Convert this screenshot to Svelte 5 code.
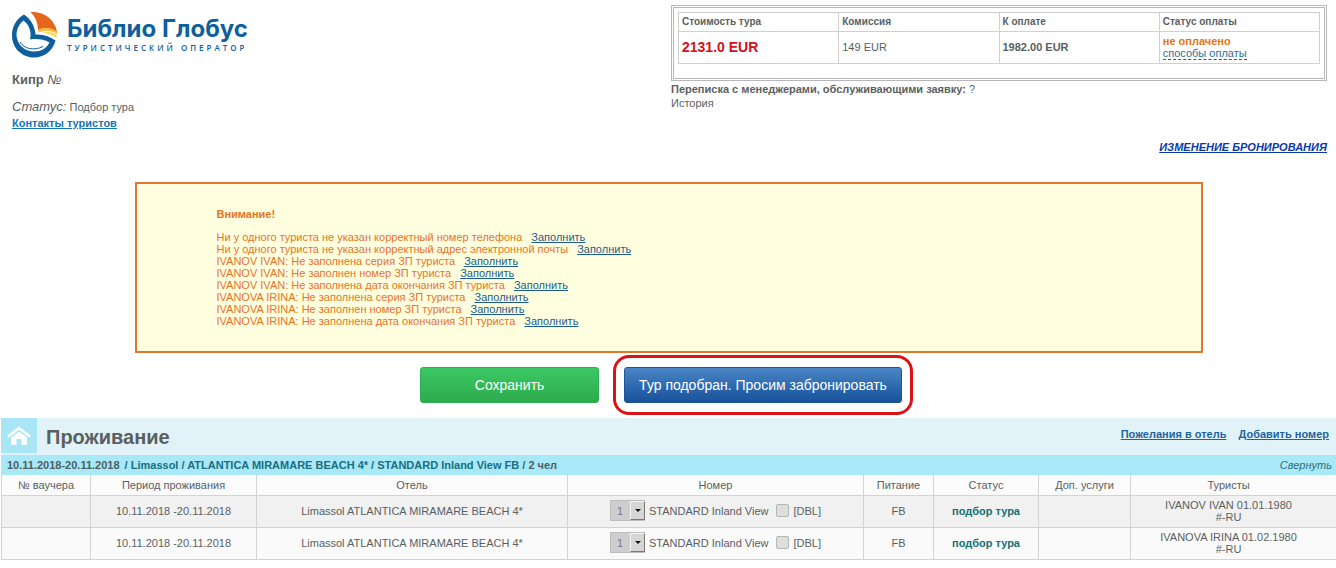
<script lang="ts">
	type Warning = {
		text: string;
	};

	type Stay = {
		period: string;
		hotel: string;
		rooms: string;
		room: string;
		bed: string;
		extraBed: boolean;
		meal: string;
		status: string;
		services: string;
		tourist: string;
		doc: string;
	};

	const warnings: Warning[] = [
		{ text: 'Ни у одного туриста не указан корректный номер телефона' },
		{ text: 'Ни у одного туриста не указан корректный адрес электронной почты' },
		{ text: 'IVANOV IVAN: Не заполнена серия ЗП туриста' },
		{ text: 'IVANOV IVAN: Не заполнен номер ЗП туриста' },
		{ text: 'IVANOV IVAN: Не заполнена дата окончания ЗП туриста' },
		{ text: 'IVANOVA IRINA: Не заполнена серия ЗП туриста' },
		{ text: 'IVANOVA IRINA: Не заполнен номер ЗП туриста' },
		{ text: 'IVANOVA IRINA: Не заполнена дата окончания ЗП туриста' }
	];

	let stays = $state<Stay[]>([
		{
			period: '10.11.2018 -20.11.2018',
			hotel: 'Limassol ATLANTICA MIRAMARE BEACH 4*',
			rooms: '1',
			room: 'STANDARD Inland View',
			bed: '[DBL]',
			extraBed: false,
			meal: 'FB',
			status: 'подбор тура',
			services: '',
			tourist: 'IVANOV IVAN 01.01.1980',
			doc: '#-RU'
		},
		{
			period: '10.11.2018 -20.11.2018',
			hotel: 'Limassol ATLANTICA MIRAMARE BEACH 4*',
			rooms: '1',
			room: 'STANDARD Inland View',
			bed: '[DBL]',
			extraBed: false,
			meal: 'FB',
			status: 'подбор тура',
			services: '',
			tourist: 'IVANOVA IRINA 01.02.1980',
			doc: '#-RU'
		}
	]);
</script>

<div class="page">
	<header class="top">
		<div class="booking">
			<a class="logo" href="#home" aria-label="Библио Глобус">
				<svg class="logo-mark" viewBox="0 0 46 46" aria-hidden="true">
					<path fill="#e8651c" d="M18.500 0C31 -1 43 7 45 20C39 15 32 15 26 18C26 11 23 4 18.500 0Z" />
					<path fill="#fdb92e" d="M26 18C32 15 39 15 45 20V22C39 18 32 18 27 20.500Z" />
					<path fill="#fdd44a" d="M30 21C36 19 41 20 44.500 23V26C40 22 35 21 30 21Z" />
					<path
						fill="#0e5f9e"
						fill-rule="evenodd"
						d="M12 2.500C18.500 7 23 14 23.500 22.500C31 22 37 24 43.500 28.500C41 39 32 45.500 22 45.500C10 45.500 0 36 0 23.500C0 14 4.500 7 12 2.500ZM11.500 8.500C6 13 3.500 20 5 26.500C7 34.500 14 39.500 22 39.500C29 39.500 34.500 36.500 37.500 30.500C31 27 25 26.500 18 27.500C20 20 17 12.500 11.500 8.500Z"
					/>
					<path fill="none" stroke="#0e5f9e" stroke-width="1" d="M8 30C12 37 22 39 31 34.500" />
				</svg>
				<span class="logo-text">
					<span class="logo-name">Библио Глобус</span>
					<span class="logo-sub">ТУРИСТИЧЕСКИЙ ОПЕРАТОР</span>
				</span>
			</a>
			<h1 class="country">Кипр <i>№</i></h1>
			<div class="status"><i>Статус:</i> Подбор тура</div>
			<a class="contacts" href="#contacts">Контакты туристов</a>
		</div>

		<div class="summary">
			<div class="payment">
				<table class="payment-table">
					<thead>
						<tr>
							<th>Стоимость тура</th>
							<th>Комиссия</th>
							<th>К оплате</th>
							<th>Статус оплаты</th>
						</tr>
					</thead>
					<tbody>
						<tr>
							<td class="total">2131.0 EUR</td>
							<td>149 EUR</td>
							<td><b>1982.00 EUR</b></td>
							<td>
								<div class="unpaid">не оплачено</div>
								<a class="methods" href="#methods">способы оплаты</a>
							</td>
						</tr>
					</tbody>
				</table>
			</div>
			<div class="mail"><b>Переписка с менеджерами, обслуживающими заявку:</b> ?</div>
			<div class="mail">История</div>
			<a class="change" href="#change">ИЗМЕНЕНИЕ БРОНИРОВАНИЯ</a>
		</div>
	</header>

	<section class="attention">
		<h2>Внимание!</h2>
		<ul>
			{#each warnings as warning}
				<li>{warning.text} <a href="#fill">Заполнить</a></li>
			{/each}
		</ul>
	</section>

	<div class="actions">
		<button class="btn save" type="button">Сохранить</button>
		<div class="marker">
			<button class="btn book" type="button">Тур подобран. Просим забронировать</button>
		</div>
	</div>

	<section class="stay">
		<div class="stay-head">
			<div class="stay-icon">
				<svg viewBox="0 0 24 20" width="24" height="20" aria-hidden="true">
					<path fill="none" stroke="#fff" stroke-width="2.500" d="M1 10.500L12 2L23 10.500" />
					<path fill="#fff" d="M4 11.500L12 5.500L20 11.500V19H14.500V13H9.500V19H4Z" />
				</svg>
			</div>
			<h2>Проживание</h2>
			<nav>
				<a href="#wishes">Пожелания в отель</a>
				<a href="#add">Добавить номер</a>
			</nav>
		</div>
		<div class="stay-bar">
			<div>
				<span class="dates">10.11.2018-20.11.2018</span>
				/ Limassol / ATLANTICA MIRAMARE BEACH 4* / STANDARD Inland View FB /
				<span class="people">2 чел</span>
			</div>
			<button class="collapse" type="button">Свернуть</button>
		</div>
		<table class="stay-table">
			<colgroup>
				<col class="c-voucher" />
				<col class="c-period" />
				<col class="c-hotel" />
				<col class="c-room" />
				<col class="c-meal" />
				<col class="c-status" />
				<col class="c-services" />
				<col />
			</colgroup>
			<thead>
				<tr>
					<th>№ ваучера</th>
					<th>Период проживания</th>
					<th>Отель</th>
					<th>Номер</th>
					<th>Питание</th>
					<th>Статус</th>
					<th>Доп. услуги</th>
					<th>Туристы</th>
				</tr>
			</thead>
			<tbody>
				{#each stays as stay}
					<tr>
						<td></td>
						<td>{stay.period}</td>
						<td>{stay.hotel}</td>
						<td>
							<div class="room">
								<span class="select">
									<select bind:value={stay.rooms} aria-label="Номер">
										<option>1</option>
										<option>2</option>
									</select>
									<span class="arrow"></span>
								</span>
								<span>{stay.room}</span>
								<label>
									<input type="checkbox" bind:checked={stay.extraBed} />
									{stay.bed}
								</label>
							</div>
						</td>
						<td>{stay.meal}</td>
						<td class="state">{stay.status}</td>
						<td>{stay.services}</td>
						<td>{stay.tourist}<br />{stay.doc}</td>
					</tr>
				{/each}
			</tbody>
		</table>
	</section>
</div>

<style>
	:global(body) {
		margin: 0;
		background: #fff;
	}

	.page {
		padding-left: 1px;
		font-family: 'Liberation Sans', Arial, sans-serif;
		font-size: 11px;
		line-height: 12px;
		color: #5a5f61;
	}

	h1,
	h2,
	ul {
		margin: 0;
		padding: 0;
	}

	.top {
		display: flex;
		justify-content: space-between;
		padding: 5px 9px 0 11px;
	}

	.booking {
		display: flex;
		flex-direction: column;
		align-items: flex-start;
		padding-top: 7px;
	}

	.logo {
		display: flex;
		gap: 9px;
		text-decoration: none;
		color: #0e5f9e;
	}

	.logo-mark {
		width: 46px;
		height: 46px;
	}

	.logo-text {
		display: flex;
		flex-direction: column;
		padding-top: 4px;
	}

	.logo-name {
		font-family: Inter, sans-serif;
		font-size: 24px;
		font-weight: 700;
		line-height: 26px;
	}

	.logo-sub {
		font-family: 'Open Sans', sans-serif;
		font-size: 8px;
		font-weight: 600;
		line-height: 12px;
		letter-spacing: 3px;
	}

	.country {
		margin-top: 14px;
		font-size: 13px;
		line-height: 16px;
	}

	.country i {
		font-weight: normal;
	}

	.status {
		margin-top: 11px;
		line-height: 16px;
	}

	.status i {
		font-size: 13px;
	}

	.contacts {
		margin-top: 1px;
		font-weight: bold;
		line-height: 14px;
		color: #1275b5;
	}

	.summary {
		display: flex;
		flex-direction: column;
		width: 50%;
		max-width: 656px;
	}

	.payment {
		padding: 4px 4px 14px;
		border: 3px double #b8b8bc;
	}

	.payment-table {
		width: 100%;
		border-collapse: collapse;
		table-layout: fixed;
	}

	.payment-table th,
	.payment-table td {
		padding: 0 3px;
		border: 1px solid #d2cfcc;
		text-align: left;
	}

	.payment-table th {
		height: 18px;
		font-size: 10px;
	}

	.payment-table td {
		height: 29px;
		padding-bottom: 2px;
	}

	.payment-table .total {
		font-size: 14px;
		font-weight: bold;
		color: #d2101c;
	}

	.unpaid {
		font-weight: bold;
		color: #e8750f;
	}

	.methods {
		border-bottom: 1px dashed #1b6085;
		text-decoration: none;
		color: #2d7096;
	}

	.mail {
		line-height: 14px;
	}

	.payment + .mail {
		margin-top: 1px;
	}

	.change {
		align-self: flex-end;
		margin-top: 30px;
		font-style: italic;
		font-weight: bold;
		line-height: 14px;
		color: #0b3aa8;
	}

	.attention {
		width: 80%;
		margin: 28px auto 0;
		padding: 24px 80px;
		box-sizing: border-box;
		border: 2px solid #e0762f;
		background: #ffffe0;
		color: #e8731f;
	}

	.attention h2 {
		margin-bottom: 11px;
		font-size: 11px;
		line-height: 12px;
	}

	.attention ul {
		list-style: none;
	}

	.attention a {
		margin-left: 6px;
		color: #1b5c8c;
	}

	.actions {
		display: flex;
		justify-content: center;
		align-items: center;
		gap: 14px;
		margin-top: 2px;
		padding-right: 4px;
	}

	.btn {
		height: 36px;
		padding: 0 14px;
		border-radius: 3px;
		font-family: inherit;
		font-size: 14px;
		color: #fff;
		cursor: pointer;
	}

	.save {
		width: 179px;
		border: 1px solid #2fae52;
		background: linear-gradient(#3cc865, #2dab4c);
	}

	.book {
		border: 1px solid #1c559a;
		background: linear-gradient(#4a85c6, #17529b);
	}

	.marker {
		padding: 9px 8px;
		border: 3px solid #dc1216;
		border-radius: 16px;
	}

	.stay {
		margin-top: 3px;
	}

	.stay-head {
		display: flex;
		align-items: center;
		height: 37px;
		background: #e1f3f8;
	}

	.stay-icon {
		display: flex;
		align-items: center;
		justify-content: center;
		width: 36px;
		height: 35px;
		align-self: flex-start;
		background: #a9e6f5;
	}

	.stay-head h2 {
		margin-left: 9px;
		font-size: 20px;
		line-height: 24px;
	}

	.stay-head nav {
		display: flex;
		gap: 12px;
		margin-left: auto;
		padding: 0 7px 5px 0;
	}

	.stay-head a {
		font-weight: bold;
		color: #1f649f;
	}

	.stay-bar {
		display: flex;
		align-items: center;
		justify-content: space-between;
		height: 20px;
		padding: 0 4px 0 6px;
		background: #a8e8f7;
		font-weight: bold;
		color: #176f82;
	}

	.stay-bar .dates {
		margin-right: 2px;
		color: #4d5f63;
	}

	.stay-bar .people {
		color: #4d5f63;
	}

	.collapse {
		padding: 0;
		border: 0;
		background: none;
		font: italic 11px 'Liberation Sans', Arial, sans-serif;
		color: #2d6f7d;
		cursor: pointer;
	}

	.stay-table {
		width: 100%;
		border-collapse: collapse;
		table-layout: fixed;
		text-align: center;
	}

	.stay-table th,
	.stay-table td {
		padding: 0;
		border: 1px solid #d3d3d3;
	}

	.stay-table th {
		height: 20px;
		border-top: 0;
		background: #fbfbfb;
		font-weight: normal;
	}

	.stay-table td {
		height: 29px;
		padding-bottom: 2px;
		background: #fafafa;
	}

	.stay-table th:last-child,
	.stay-table td:last-child {
		padding-right: 10px;
		border-right: 0;
	}

	.stay-table tbody tr:nth-child(odd) td {
		background: #f1f1f1;
	}

	.c-voucher {
		width: 89px;
	}

	.c-period {
		width: 166px;
	}

	.c-hotel {
		width: 311px;
	}

	.c-room {
		width: 296px;
	}

	.c-meal {
		width: 70px;
	}

	.c-status {
		width: 105px;
	}

	.c-services {
		width: 92px;
	}

	.room {
		display: flex;
		align-items: center;
		justify-content: center;
		gap: 4px;
	}

	.room label {
		display: flex;
		align-items: center;
		gap: 4px;
		margin-left: 4px;
	}

	.select {
		display: flex;
		position: relative;
	}

	.select select {
		width: 35px;
		height: 21px;
		padding: 0 0 0 6px;
		appearance: none;
		border: 1px solid #bdbdbd;
		border-radius: 0;
		background: #cecece;
		font-family: inherit;
		font-size: 11px;
		color: #777;
	}

	.select .arrow {
		display: flex;
		position: absolute;
		top: 1px;
		right: 0;
		bottom: 1px;
		width: 15px;
		box-sizing: border-box;
		align-items: center;
		justify-content: center;
		border: 1px solid;
		border-color: #f4f4f4 #777 #777 #f4f4f4;
		background: #d6d6d6;
		pointer-events: none;
	}

	.select .arrow::after {
		content: '';
		border: 3px solid transparent;
		border-top-color: #111;
		border-bottom: 0;
	}

	.room input {
		width: 13px;
		height: 13px;
		margin: 0;
		appearance: none;
		border: 1px solid #b5b5b5;
		border-radius: 2px;
		background: #dedede;
	}

	.room input:checked {
		background: #888;
	}

	.state {
		font-weight: bold;
		color: #166e74;
	}
</style>
